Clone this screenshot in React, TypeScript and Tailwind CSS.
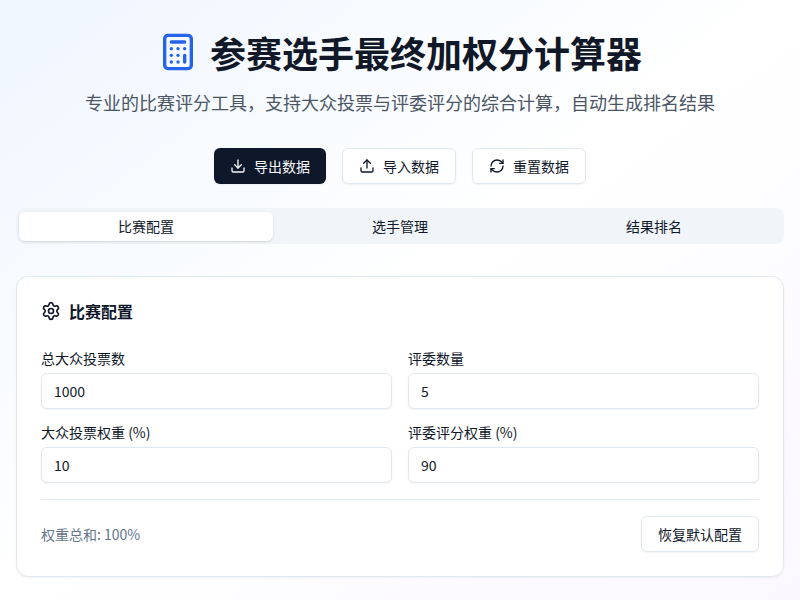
import { Calculator, Download, Upload, RefreshCw, Settings } from "lucide-react";

const font = "font-['Noto_Sans_CJK_SC',sans-serif]";

function Field({ label, value }: { label: string; value: string }) {
  return (
    <div className="flex flex-col gap-2">
      <label className="text-sm leading-[14px] text-[#0f172a]">{label}</label>
      <input
        readOnly
        value={value}
        className="h-9 w-full rounded-md border border-[#e2e8f0] bg-white px-3 text-sm text-[#0f172a] shadow-xs outline-none"
      />
    </div>
  );
}

export default function App() {
  return (
    <div className={`${font} h-[600px] overflow-hidden bg-gradient-to-br from-[#eff6ff] via-white to-[#faf7ff] p-4`}>
      {/* Header */}
      <div className="mb-6 pt-4 text-center">
        <div className="mb-4 flex items-center justify-center gap-3">
          <Calculator size={40} className="text-[#2563eb]" />
          <h1 className="text-4xl leading-10 font-bold text-[#111827]">参赛选手最终加权分计算器</h1>
        </div>
        <p className="text-lg leading-7 text-[#4b5563]">专业的比赛评分工具，支持大众投票与评委评分的综合计算，自动生成排名结果</p>
      </div>

      {/* Actions */}
      <div className="mb-6 mt-8 flex h-9 items-center justify-center gap-4">
        <button className="flex h-9 items-center gap-2 rounded-md bg-[#0f172a] px-4 text-sm text-[#f8fafc] shadow-xs">
          <Download size={16} />
          导出数据
        </button>
        <button className="flex h-9 items-center gap-2 rounded-md border border-[#e2e8f0] bg-white px-4 text-sm text-[#0f172a] shadow-xs">
          <Upload size={16} />
          导入数据
        </button>
        <button className="flex h-9 items-center gap-2 rounded-md border border-[#e2e8f0] bg-white px-4 text-sm text-[#0f172a] shadow-xs">
          <RefreshCw size={16} />
          重置数据
        </button>
      </div>

      {/* Tabs */}
      <div className="grid h-9 grid-cols-3 items-center rounded-lg bg-[#f1f5f9] p-[3px] text-sm text-[#0f172a]">
        <div className="flex h-[29px] items-center justify-center rounded-md bg-white shadow-sm">比赛配置</div>
        <div className="text-center">选手管理</div>
        <div className="text-center">结果排名</div>
      </div>

      {/* Config card */}
      <div className="mt-8 rounded-xl border border-[#e2e8f0] bg-white p-6 shadow-xs">
        <div className="mb-[30px] flex h-5 items-center gap-2 text-[#0f172a]">
          <Settings size={20} />
          <h2 className="text-base leading-5 font-bold">比赛配置</h2>
        </div>
        <div className="grid grid-cols-2 gap-x-4 gap-y-4">
          <Field label="总大众投票数" value="1000" />
          <Field label="评委数量" value="5" />
          <Field label="大众投票权重 (%)" value="10" />
          <Field label="评委评分权重 (%)" value="90" />
        </div>
        <div className="mt-4 flex items-center justify-between border-t border-[#e2e8f0] pt-4">
          <span className="text-sm text-[#64748b]">权重总和: 100%</span>
          <button className="flex h-9 items-center rounded-md border border-[#e2e8f0] bg-white px-4 text-sm text-[#0f172a] shadow-xs">
            恢复默认配置
          </button>
        </div>
      </div>
    </div>
  );
}
